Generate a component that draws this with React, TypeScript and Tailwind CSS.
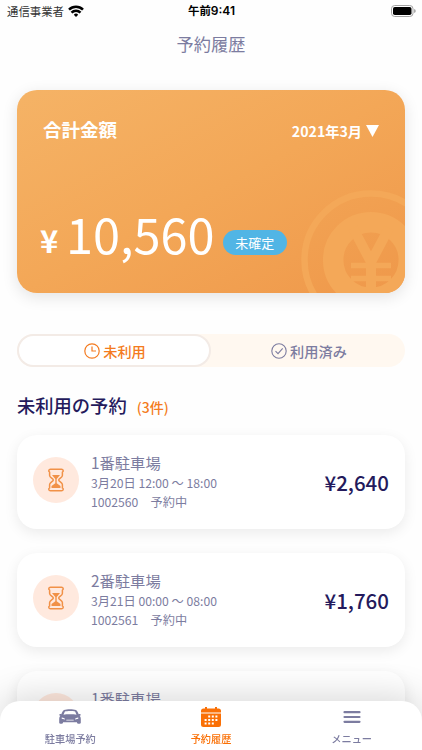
import clsx from 'clsx'
import type { ReactNode } from 'react'

type Reservation = {
  name: string
  id?: string
  time?: string
  price?: string
}

const reservations: Reservation[] = [
  { id: '1002560', name: '1番駐車場', time: '3月20日 12:00 〜 18:00', price: '¥2,640' },
  { id: '1002561', name: '2番駐車場', time: '3月21日 00:00 〜 08:00', price: '¥1,760' },
  { name: '1番駐車場' },
]

function StatusBar() {
  return (
    <div className="grid h-[21px] grid-cols-3 items-center pr-1.5 pl-[7px] text-[11.4px] leading-[20px] text-black">
      <div className="flex items-center gap-1 text-[#333]">
        <span>通信事業者</span>
        <svg viewBox="0 0 16 12" className="h-3 w-4" fill="none" stroke="#000" strokeWidth="2.5">
          <path d="M1 4.7a10 10 0 0 1 14 0" />
          <path d="M3.5 7.6a6.2 6.2 0 0 1 9 0" />
          <path d="M5.8 9.7a3.1 3.1 0 0 1 4.4 0L8 11.9Z" fill="#000" stroke="none" />
        </svg>
      </div>
      <div className="text-center font-bold">
        午前<span className="font-['Inter','Liberation_Sans',sans-serif] text-[12px] font-semibold">9:41</span>
      </div>
      <svg viewBox="0 0 25 12" className="h-3 w-[25px] justify-self-end">
        <rect x=".5" y=".5" width="21.5" height="11" rx="3.2" fill="#fff" stroke="#a3a3a3" />
        <rect x="2" y="2" width="18.5" height="8" rx="1.8" fill="#000" />
        <path d="M23.4 4v4c1.5-.7 1.5-3.3 0-4Z" fill="#777" />
      </svg>
    </div>
  )
}

function Coin() {
  return (
    <svg
      viewBox="0 0 140 140"
      className="absolute top-[100px] left-[284px] h-[140px] w-[140px]"
      fill="none"
      stroke="#f4a858"
    >
      <circle cx="70" cy="70" r="66.5" strokeWidth="6.5" />
      <circle cx="70" cy="70" r="37.8" strokeWidth="20.5" />
      <path d="M52 38l18 34 18-34M70 70v30" strokeWidth="10" />
      <path d="M50 75.5h40M50 88.5h40" strokeWidth="5.5" />
    </svg>
  )
}

function TotalCard() {
  return (
    <section className="relative h-[203px] overflow-hidden rounded-[20px] bg-linear-to-br from-[#f5b366] via-[#f3a757] to-[#ef984a] text-white">
      <Coin />
      <div className="relative flex h-full flex-col justify-between pt-[25px] pr-[26px] pb-[32px] pl-[23px]">
        <div className="flex items-center justify-between">
          <h2 className="pl-[3px] text-[18.5px] leading-7 font-bold">合計金額</h2>
          <button type="button" className="mt-1 flex items-center gap-1 text-[14.2px] leading-6 font-bold">
            2021年3月
            <svg viewBox="0 0 13 12" className="h-3 w-[13px]" fill="currentColor">
              <path d="M0 0h13L6.5 12Z" />
            </svg>
          </button>
        </div>
        <div className="flex items-end">
          <span className="mb-[5px] w-[26px] text-[31px] leading-8 font-bold">¥</span>
          <span className="text-[48.7px] leading-[56px]">10,560</span>
          <span className="mb-1.5 ml-2 h-[25px] w-16 rounded-full bg-[#51b5e5] text-center text-[13px] leading-[25px]">
            未確定
          </span>
        </div>
      </div>
    </section>
  )
}

function Tabs() {
  return (
    <div className="grid h-[33px] grid-cols-2 rounded-full bg-[#fff8f0] text-[14.2px] leading-5 font-medium">
      <button
        type="button"
        className="flex items-center justify-center gap-[3px] rounded-full border-2 border-[#f3ebe6] bg-white pl-0.5 text-[#f47b20]"
      >
        <svg viewBox="0 0 16 16" className="h-4 w-4" fill="none" stroke="currentColor" strokeWidth="1.2">
          <circle cx="8" cy="8" r="7.2" />
          <path d="M8 3.5V8h4" />
        </svg>
        未利用
      </button>
      <button type="button" className="flex items-center justify-center gap-[3px] pl-0.5 text-[#7c7ca0]">
        <svg viewBox="0 0 16 16" className="h-4 w-4" fill="none" stroke="currentColor" strokeWidth="1.1">
          <circle cx="8" cy="8" r="7.2" />
          <path d="M4.5 8.2 7 10.7l4.7-5.3" />
        </svg>
        利用済み
      </button>
    </div>
  )
}

function Hourglass() {
  return (
    <svg viewBox="0 0 18 24" className="h-6 w-[18px]" fill="none" stroke="#f19147" strokeWidth="1.5">
      <path
        d="M3.5 1.2h11c2 0 2.200 2.200.9 2.900v3.300c0 2.100-3.700 3-3.700 4.600s3.700 2.500 3.700 4.600v3.300c1.300.7 1.100 2.900-.9 2.900h-11c-2 0-2.200-2.200-.9-2.900v-3.300c0-2.100 3.700-3 3.700-4.600S2.600 9.500 2.600 7.400V4.100c-1.300-.7-1.100-2.900.9-2.900Z"
        strokeLinejoin="round"
      />
      <path d="M5 7h8L9.700 11v4.300l3.800 2.700v2h-9v-2l3.800-2.700V11Z" fill="#f19147" stroke="none" />
    </svg>
  )
}

function ReservationCard({ item }: { item: Reservation }) {
  return (
    <li className="flex h-[94px] items-center rounded-[20px] bg-white px-4 shadow-[0_4px_14px_rgba(0,0,0,0.08)]">
      <div className="-mt-1 flex h-[46px] w-[46px] items-center justify-center rounded-full bg-[#ffe9de]">
        <Hourglass />
      </div>
      <div className="-mt-0.5 ml-3 h-[60px] flex-1 text-[12.2px] leading-[18.5px] text-[#7c7ca0]">
        <h3 className="mb-px text-[15.3px] leading-[22px]">{item.name}</h3>
        {item.time && <p>{item.time}</p>}
        {item.id && <p>{item.id}　予約中</p>}
      </div>
      {item.price && <div className="text-[20.5px] font-medium text-[#241a5c]">{item.price}</div>}
    </li>
  )
}

function NavItem({ label, active, children }: { label: string; active?: boolean; children: ReactNode }) {
  return (
    <button
      type="button"
      className={clsx(
        'flex flex-1 flex-col items-center pt-1.5 text-[10.2px] leading-4 font-medium',
        active ? 'text-[#fa7006]' : 'text-[#7c7ca0]',
      )}
    >
      <span className="mb-1 flex h-[20px] items-center">{children}</span>
      {label}
    </button>
  )
}

function BottomNav() {
  return (
    <nav className="fixed inset-x-0 bottom-0 flex h-[49px] rounded-t-[20px] bg-white shadow-[0_-4px_36px_rgba(0,0,0,0.16)]">
      <NavItem label="駐車場予約">
        <svg viewBox="0 0 22 16" className="h-4 w-[22px]" fill="currentColor">
          <path
            fillRule="evenodd"
            d="M5 1C8 .1 14 .1 17 1c1.2.5 2 2.5 2.7 4.2.7-.5 2-.4 2 .5 0 .7-.5 1-1.1 1.1.8.8 1.2 1.800 1.200 3v4c0 1.400-3.800 1.400-3.800 0v-.6H4v.6c0 1.400-3.800 1.400-3.800 0v-4c0-1.200.4-2.200 1.200-3C.8 6.700.3 6.400.3 5.700c0-.9 1.300-1 2-.5C3 3.500 3.800 1.500 5 1ZM5.900 2.400 4.500 5.800c3-.6 10-.6 13 0l-1.400-3.400c-2-.7-8.200-.7-10.200 0ZM2.700 8.500v1.300l3.300.7c.4-1-1.500-1.900-3.300-2Zm16.600 0c-1.800.1-3.700 1-3.300 2l3.300-.7V8.500ZM7.300 11.600h7.400v-.8H7.300v.8Z"
          />
        </svg>
      </NavItem>
      <NavItem label="予約履歴" active>
        <svg viewBox="0 0 20 20" className="h-5 w-5" fill="currentColor">
          <path d="M2.5 1.500H4V0h2v1.500h8V0h2v1.500h1.500A2.500 2.500 0 0 1 20 4v1.500H0V4a2.500 2.500 0 0 1 2.500-2.500ZM0 6.500h20v11a2.500 2.500 0 0 1-2.500 2.500h-15A2.500 2.500 0 0 1 0 17.500Z" />
          <path
            d="M7.2 9.600h2M10.800 9.600h2M14.400 9.600h2M3.600 13h2M7.200 13h2M10.800 13h2M14.400 13h2M3.600 16.400h2M7.200 16.400h2M10.800 16.400h2"
            stroke="#fff"
            strokeWidth="2"
          />
        </svg>
      </NavItem>
      <NavItem label="メニュー">
        <svg viewBox="0 0 18 12" className="h-3 w-[18px]" stroke="currentColor" strokeWidth="2.2" strokeLinecap="round">
          <path d="M1.5 1.2h15M1.5 6h15M1.5 10.8h15" />
        </svg>
      </NavItem>
    </nav>
  )
}

export default function App() {
  return (
    <div className="h-[750px] overflow-hidden bg-[#fefefe] font-['Noto_Sans_CJK_JP',sans-serif]">
      <StatusBar />
      <h1 className="h-[69px] pt-[11px] text-center text-[17.2px] leading-6 text-[#7c7ca0]">予約履歴</h1>
      <main className="px-[17px]">
        <div className="rounded-[20px] shadow-[0_4px_16px_rgba(0,0,0,0.11)]">
          <TotalCard />
        </div>
        <div className="mt-[41px]">
          <Tabs />
        </div>
        <div className="mt-[24px] flex items-baseline gap-2.5 text-[#241a5c]">
          <h2 className="text-[18.3px] leading-7 font-medium">未利用の予約</h2>
          <span className="text-[14px] font-medium text-[#f47b20]">(3件)</span>
        </div>
        <ul className="mt-4 flex flex-col gap-6">
          {reservations.map((item, i) => (
            <ReservationCard key={i} item={item} />
          ))}
        </ul>
      </main>
      <BottomNav />
    </div>
  )
}
